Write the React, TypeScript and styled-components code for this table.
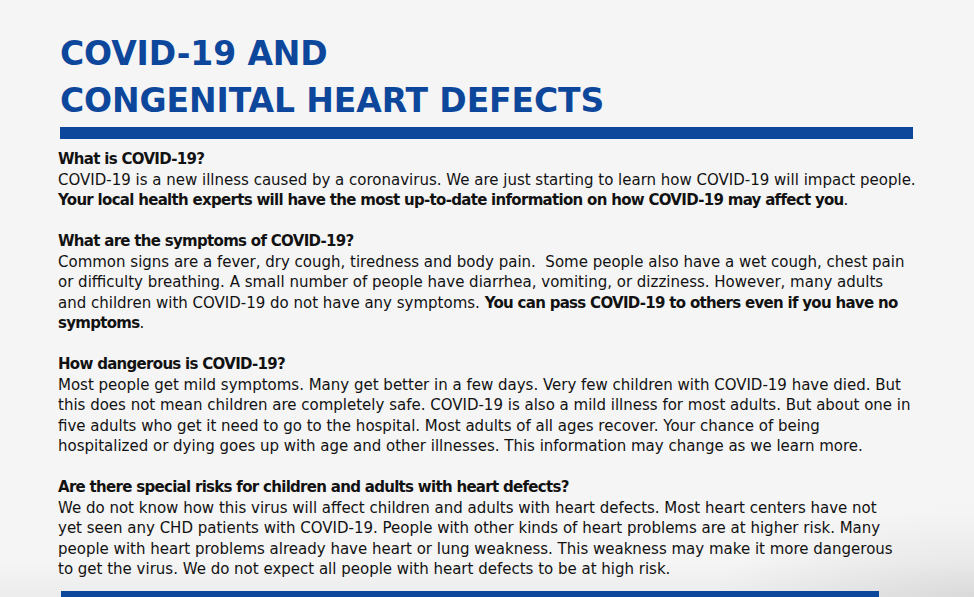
import styled, { createGlobalStyle } from 'styled-components';

const GlobalStyle = createGlobalStyle`
  html, body {
    margin: 0;
    padding: 0;
  }
  body {
    background: #f5f5f5;
    font-family: 'DejaVu Sans', 'Noto Sans', sans-serif;
    color: #121212;
    overflow: hidden;
  }
`;

type Seg = { text: string; bold?: boolean };
type Section = { question: string; lines: Seg[][] };

const sections: Section[] = [
  {
    question: 'What is COVID-19?',
    lines: [
      [{ text: 'COVID-19 is a new illness caused by a coronavirus. We are just starting to learn how COVID-19 will impact people.' }],
      [
        { text: 'Your local health experts will have the most up-to-date information on how COVID-19 may affect you', bold: true },
        { text: '.' },
      ],
    ],
  },
  {
    question: 'What are the symptoms of COVID-19?',
    lines: [
      [{ text: 'Common signs are a fever, dry cough, tiredness and body pain.  Some people also have a wet cough, chest pain' }],
      [{ text: 'or difficulty breathing. A small number of people have diarrhea, vomiting, or dizziness. However, many adults' }],
      [
        { text: 'and children with COVID-19 do not have any symptoms. ' },
        { text: 'You can pass COVID-19 to others even if you have no', bold: true },
      ],
      [{ text: 'symptoms', bold: true }, { text: '.' }],
    ],
  },
  {
    question: 'How dangerous is COVID-19?',
    lines: [
      [{ text: 'Most people get mild symptoms. Many get better in a few days. Very few children with COVID-19 have died. But' }],
      [{ text: 'this does not mean children are completely safe. COVID-19 is also a mild illness for most adults. But about one in' }],
      [{ text: 'five adults who get it need to go to the hospital. Most adults of all ages recover. Your chance of being' }],
      [{ text: 'hospitalized or dying goes up with age and other illnesses. This information may change as we learn more.' }],
    ],
  },
  {
    question: 'Are there special risks for children and adults with heart defects?',
    lines: [
      [{ text: 'We do not know how this virus will affect children and adults with heart defects. Most heart centers have not' }],
      [{ text: 'yet seen any CHD patients with COVID-19. People with other kinds of heart problems are at higher risk. Many' }],
      [{ text: 'people with heart problems already have heart or lung weakness. This weakness may make it more dangerous' }],
      [{ text: 'to get the virus. We do not expect all people with heart defects to be at high risk.' }],
    ],
  },
];

export default function App() {
  return (
    <>
      <GlobalStyle />
      <Page>
        <Title>
          <TitleLine>COVID-19 AND</TitleLine>
          <TitleLine>CONGENITAL HEART DEFECTS</TitleLine>
        </Title>
        <Rule $width={853} />
        <Body>
          {sections.map(section => (
            <Block key={section.question}>
              <Line>
                <Strong>{section.question}</Strong>
              </Line>
              {section.lines.map((segs, i) => (
                <Line key={i}>
                  {segs.map((seg, j) =>
                    seg.bold ? <Strong key={j}>{seg.text}</Strong> : <span key={j}>{seg.text}</span>
                  )}
                </Line>
              ))}
            </Block>
          ))}
        </Body>
        <Rule $width={818} $bottom />
      </Page>
    </>
  );
}

const Page = styled.div`
  width: 974px;
  height: 597px;
  box-sizing: border-box;
  padding: 30px 0 0 58px;
  display: flex;
  flex-direction: column;
  background:
    radial-gradient(ellipse 260px 90px at 100% 100%, rgba(0, 0, 0, 0.08), rgba(0, 0, 0, 0)),
    linear-gradient(to bottom, rgba(0, 0, 0, 0) 94%, rgba(0, 0, 0, 0.04) 100%),
    #f5f5f5;
`;

const Title = styled.h1`
  margin: 0 0 0 2px;
  font-family: 'DejaVu Sans', sans-serif;
  font-weight: 700;
  font-size: 33px;
  line-height: 47px;
  color: #0d479c;
  letter-spacing: -0.1px;
`;

const TitleLine = styled.div`
  white-space: nowrap;
`;

const Rule = styled.div<{ $width: number; $bottom?: boolean }>`
  width: ${p => p.$width}px;
  height: 12px;
  margin: ${p => (p.$bottom ? '11px 0 0 3px' : '3px 0 0 2px')};
  background: #0d479c;
  flex-shrink: 0;
`;

const Body = styled.div`
  margin-top: 10px;
  display: flex;
  flex-direction: column;
  gap: 20.5px;
  font-size: 15px;
  line-height: 20.5px;
`;

const Block = styled.div`
  display: flex;
  flex-direction: column;
`;

const Line = styled.div`
  white-space: pre;
`;

const Strong = styled.span`
  font-weight: 700;
  letter-spacing: -0.7px;
`;
